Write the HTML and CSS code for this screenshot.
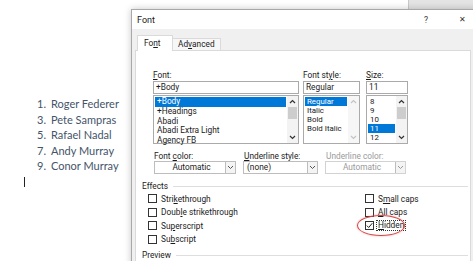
FILE: index.html
```html
<!DOCTYPE html>
<html lang="en">
<head>
    <meta charset="UTF-8">
    <meta name="viewport" content="width=device-width, initial-scale=1.0">
    <title>Font</title>
    <link rel="stylesheet" href="styles.css">
</head>
<body>
    <div class="doc">
        <ol class="players">
            <li><span class="num">1.</span>Roger Federer</li>
            <li><span class="num">3.</span>Pete Sampras</li>
            <li><span class="num">5.</span>Rafael Nadal</li>
            <li><span class="num">7.</span>Andy Murray</li>
            <li><span class="num">9.</span>Conor Murray</li>
        </ol>
        <div class="caret"></div>
    </div>

    <div class="back-window"></div>

    <div class="dialog">
        <div class="titlebar">
            <span class="title">Font</span>
            <span class="help">?</span>
            <span class="close">&#x2715;</span>
        </div>
        <div class="dialog-body">
            <div class="tabs">
                <div class="tab active">Fo<u>n</u>t</div>
                <div class="tab">Ad<u>v</u>anced</div>
            </div>
            <div class="panel">
                <div class="font-grid">
                    <div class="field col-font">
                        <div class="label"><u>F</u>ont:</div>
                        <div class="textbox">+Body</div>
                        <div class="listbox tall">
                            <ul>
                                <li class="sel">+Body</li>
                                <li>+Headings</li>
                                <li>Abadi</li>
                                <li>Abadi Extra Light</li>
                                <li>Agency FB</li>
                            </ul>
                            <div class="scroll">
                                <div class="arrow"><svg width="7" height="5" viewBox="0 0 7 5"><path d="M1 4 L3.5 1.5 L6 4" fill="none" stroke="#333" stroke-width="1.2"/></svg></div>
                                <div class="thumb"></div>
                                <div class="track"></div>
                                <div class="arrow"><svg width="7" height="5" viewBox="0 0 7 5"><path d="M1 1 L3.5 3.5 L6 1" fill="none" stroke="#333" stroke-width="1.2"/></svg></div>
                            </div>
                        </div>
                    </div>
                    <div class="field col-style">
                        <div class="label">Font st<u>y</u>le:</div>
                        <div class="textbox">Regular</div>
                        <div class="listbox">
                            <ul>
                                <li class="sel">Regular</li>
                                <li>Italic</li>
                                <li>Bold</li>
                                <li>Bold Italic</li>
                            </ul>
                            <div class="scroll off">
                                <div class="arrow"><svg width="7" height="5" viewBox="0 0 7 5"><path d="M1 4 L3.5 1.5 L6 4" fill="none" stroke="#c4c4c4" stroke-width="1.2"/></svg></div>
                                <div class="track"></div>
                                <div class="arrow"><svg width="7" height="5" viewBox="0 0 7 5"><path d="M1 1 L3.5 3.5 L6 1" fill="none" stroke="#c4c4c4" stroke-width="1.2"/></svg></div>
                            </div>
                        </div>
                    </div>
                    <div class="field col-size">
                        <div class="label"><u>S</u>ize:</div>
                        <div class="textbox">11</div>
                        <div class="listbox">
                            <ul>
                                <li>8</li>
                                <li>9</li>
                                <li>10</li>
                                <li class="sel">11</li>
                                <li>12</li>
                            </ul>
                            <div class="scroll">
                                <div class="arrow"><svg width="7" height="5" viewBox="0 0 7 5"><path d="M1 4 L3.5 1.5 L6 4" fill="none" stroke="#333" stroke-width="1.2"/></svg></div>
                                <div class="thumb"></div>
                                <div class="track"></div>
                                <div class="arrow"><svg width="7" height="5" viewBox="0 0 7 5"><path d="M1 1 L3.5 3.5 L6 1" fill="none" stroke="#333" stroke-width="1.2"/></svg></div>
                            </div>
                        </div>
                    </div>
                </div>

                <div class="combo-row">
                    <div class="field col-color">
                        <div class="label">Font <u>c</u>olor:</div>
                        <div class="combo">
                            <span class="value center">Automatic</span>
                            <span class="drop"><svg width="7" height="5" viewBox="0 0 7 5"><path d="M1 1 L3.5 3.5 L6 1" fill="none" stroke="#555" stroke-width="1"/></svg></span>
                        </div>
                    </div>
                    <div class="field col-uline">
                        <div class="label"><u>U</u>nderline style:</div>
                        <div class="combo">
                            <span class="value">(none)</span>
                            <span class="drop"><svg width="7" height="5" viewBox="0 0 7 5"><path d="M1 1 L3.5 3.5 L6 1" fill="none" stroke="#555" stroke-width="1"/></svg></span>
                        </div>
                    </div>
                    <div class="field col-ucolor disabled">
                        <div class="label">Underline color:</div>
                        <div class="combo">
                            <span class="value center">Automatic</span>
                            <span class="drop"><svg width="7" height="5" viewBox="0 0 7 5"><path d="M1 1 L3.5 3.5 L6 1" fill="none" stroke="#999" stroke-width="1"/></svg></span>
                        </div>
                    </div>
                </div>

                <div class="group-title">Effects</div>
                <div class="effects">
                    <div class="effects-col left">
                        <div class="check"><span class="box"></span>Stri<u>k</u>ethrough</div>
                        <div class="check"><span class="box"></span>Doub<u>l</u>e strikethrough</div>
                        <div class="check"><span class="box"></span>Su<u>p</u>erscript</div>
                        <div class="check"><span class="box"></span>Su<u>b</u>script</div>
                    </div>
                    <div class="effects-col">
                        <div class="check"><span class="box"></span>S<u>m</u>all caps</div>
                        <div class="check"><span class="box"></span><u>A</u>ll caps</div>
                        <div class="check hidden-row">
                            <span class="box checked"><svg width="7" height="7" viewBox="0 0 7 7"><path d="M0.8 3.6 L2.7 5.5 L6.3 1.2" fill="none" stroke="#222" stroke-width="1"/></svg></span>
                            <span class="focus"><u>H</u>idden</span>
                            <span class="ring"></span>
                        </div>
                    </div>
                </div>
                <div class="group-title preview">Preview</div>
            </div>
        </div>
    </div>
</body>
</html>
```

FILE: styles.css
```css
* {
    margin: 0;
    padding: 0;
    box-sizing: border-box;
}

body {
    width: 473px;
    height: 261px;
    overflow: hidden;
    position: relative;
    background: #ffffff;
    font-family: Roboto, "Noto Sans", sans-serif;
    color: #1a1a1a;
}

/* document behind the dialog */
.doc {
    padding: 96px 0 0 24px;
    font-family: Lato, "Liberation Sans", sans-serif;
    font-size: 11px;
    color: #44546a;
}

.players {
    list-style: none;
    padding-left: 13px;
}

.players li {
    height: 15.5px;
    line-height: 15.5px;
}

.players .num {
    display: inline-block;
    width: 14px;
}

.caret {
    width: 1px;
    height: 10px;
    margin-top: 3px;
    background: #222;
}

.back-window {
    position: absolute;
    top: 0;
    left: 408px;
    width: 70px;
    height: 9px;
    background: #e4e4e4;
    border-left: 1px solid #c9c9c9;
}

/* dialog */
.dialog {
    position: absolute;
    left: 131px;
    top: 9px;
    width: 346px;
    height: 262px;
    border: 1px solid #a8a8a8;
    background: #f0f0f0;
    box-shadow: 0 0 7px rgba(0, 0, 0, 0.22);
}

.titlebar {
    height: 19px;
    background: #ffffff;
    display: flex;
    align-items: center;
    padding: 0 10px 0 5px;
    font-size: 9px;
}

.help {
    margin-left: auto;
    margin-right: 31px;
    font-size: 8.5px;
    color: #333;
}

.close {
    font-size: 8px;
    color: #333;
}

.dialog-body {
    padding: 6px 5px 0 3px;
}

.tabs {
    display: flex;
    align-items: flex-end;
    height: 15px;
    padding-left: 2px;
}

.tab {
    font-size: 8.3px;
    height: 12px;
    line-height: 11px;
    padding: 0 5px;
    border: 1px solid #dadada;
    border-bottom: none;
    border-left: none;
    background: #f7f7f7;
}

.tab.active {
    width: 36px;
    height: 16px;
    line-height: 15px;
    padding-left: 6px;
    margin-bottom: -1px;
    border-left: 1px solid #dadada;
    background: #ffffff;
    position: relative;
    z-index: 1;
}

.panel {
    height: 220px;
    background: #ffffff;
    border: 1px solid #dadada;
    padding: 19px 2px 0 6px;
}

.label {
    font-size: 8.3px;
    height: 10px;
    line-height: 10px;
    white-space: nowrap;
}

.font-grid {
    display: flex;
    margin-left: 11px;
}

.col-font { width: 146px; }
.col-style { width: 57px; margin-left: 4px; }
.col-size { width: 42px; margin-left: 6px; }

.textbox {
    height: 13px;
    margin-top: 1px;
    border: 1px solid #aaaaaa;
    font-size: 8.3px;
    line-height: 11px;
    padding-left: 2px;
}

.listbox {
    height: 49px;
    margin-top: 1px;
    border: 1px solid #aaaaaa;
    display: flex;
}

.listbox ul {
    flex: 1;
    list-style: none;
    padding: 1px 1px 0;
}

.listbox li {
    height: 9px;
    line-height: 9px;
    font-size: 7.9px;
    padding-left: 2px;
    white-space: nowrap;
}

.listbox.tall li {
    height: 9.8px;
    line-height: 9.8px;
    font-size: 8.3px;
}

.listbox li.sel {
    background: #0078d7;
    color: #ffffff;
}

.scroll {
    width: 11px;
    display: flex;
    flex-direction: column;
    background: #f3f3f3;
}

.scroll.off {
    background: #f6f6f6;
}

.arrow {
    height: 11px;
    display: flex;
    align-items: center;
    justify-content: center;
}

.thumb {
    height: 12px;
    margin: 0 1px;
    background: #cdcdcd;
}

.track {
    flex: 1;
}

.combo-row {
    display: flex;
    margin-top: 7px;
    margin-left: 12px;
}

.col-color { width: 82px; }
.col-uline { width: 75px; margin-left: 7px; }
.col-ucolor { width: 81px; margin-left: 7px; }

.col-uline .label { padding-left: 1px; }
.col-ucolor .label { padding-left: 1px; }

.combo {
    height: 13px;
    border: 1px solid #bdbdbd;
    display: flex;
    font-size: 8.3px;
    line-height: 11px;
}

.combo .value {
    flex: 1;
    padding-left: 3px;
}

.combo .value.center {
    text-align: center;
}

.combo .drop {
    width: 10px;
    border-left: 1px solid #bdbdbd;
    background: #f4f4f4;
    display: flex;
    align-items: center;
    justify-content: center;
}

.disabled {
    color: #9a9a9a;
}

.disabled .combo {
    border-color: #d2d2d2;
}

.group-title {
    display: flex;
    align-items: center;
    margin-top: 7px;
    height: 10px;
    font-size: 8.3px;
    line-height: 10px;
}

.group-title::after {
    content: "";
    flex: 1;
    height: 1px;
    margin-left: 5px;
    background: #dedede;
}

.group-title.preview {
    margin-top: 4px;
}

.effects {
    display: flex;
    margin: 1px 0 0 6px;
}

.effects-col.left {
    width: 217px;
}

.check {
    display: flex;
    align-items: center;
    height: 13.5px;
    font-size: 8.3px;
    white-space: nowrap;
}

.box {
    width: 9px;
    height: 9px;
    margin-right: 4px;
    border: 1px solid #333333;
    background: #ffffff;
    display: flex;
    align-items: center;
    justify-content: center;
}

.box.checked {
    margin-right: 3px;
}

.focus {
    outline: 1px dotted #333;
    padding: 0 1px;
    line-height: 9px;
}

.hidden-row {
    position: relative;
}

.ring {
    position: absolute;
    left: -8px;
    top: -4px;
    width: 48px;
    height: 21px;
    border: 1.5px solid #d64545;
    border-radius: 50%;
    box-shadow: 0 0 2px rgba(214, 69, 69, 0.5);
}
```
